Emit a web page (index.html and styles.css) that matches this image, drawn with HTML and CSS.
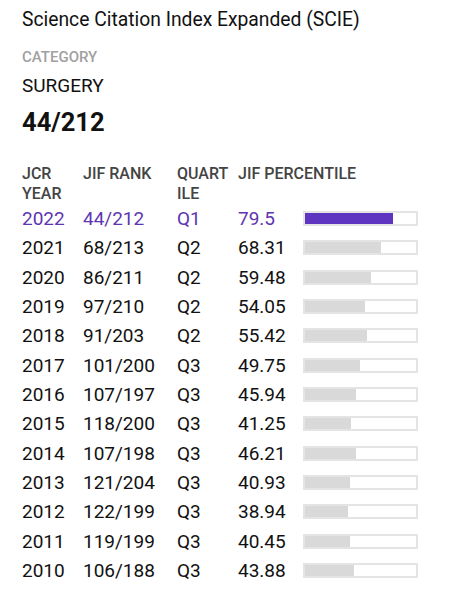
FILE: index.html
```html
<!DOCTYPE html>
<html>
<head>
<meta charset="utf-8">
<link rel="stylesheet" href="styles.css">
</head>
<body>
<div class="page">
  <div class="title">Science Citation Index Expanded (SCIE)</div>
  <div class="cat-label">CATEGORY</div>
  <div class="cat-name">SURGERY</div>
  <div class="cat-rank">44/212</div>
  <div class="table">
    <div class="row head">
      <div>JCR YEAR</div><div>JIF RANK</div><div class="q">QUARTILE</div><div class="pct-h">JIF PERCENTILE</div>
    </div>
    <div class="row current"><div>2022</div><div>44/212</div><div>Q1</div><div>79.5</div><div class="bar"><span style="width:79.5%"></span></div></div>
    <div class="row"><div>2021</div><div>68/213</div><div>Q2</div><div>68.31</div><div class="bar"><span style="width:68.31%"></span></div></div>
    <div class="row"><div>2020</div><div>86/211</div><div>Q2</div><div>59.48</div><div class="bar"><span style="width:59.48%"></span></div></div>
    <div class="row"><div>2019</div><div>97/210</div><div>Q2</div><div>54.05</div><div class="bar"><span style="width:54.05%"></span></div></div>
    <div class="row"><div>2018</div><div>91/203</div><div>Q2</div><div>55.42</div><div class="bar"><span style="width:55.42%"></span></div></div>
    <div class="row"><div>2017</div><div>101/200</div><div>Q3</div><div>49.75</div><div class="bar"><span style="width:49.75%"></span></div></div>
    <div class="row"><div>2016</div><div>107/197</div><div>Q3</div><div>45.94</div><div class="bar"><span style="width:45.94%"></span></div></div>
    <div class="row"><div>2015</div><div>118/200</div><div>Q3</div><div>41.25</div><div class="bar"><span style="width:41.25%"></span></div></div>
    <div class="row"><div>2014</div><div>107/198</div><div>Q3</div><div>46.21</div><div class="bar"><span style="width:46.21%"></span></div></div>
    <div class="row"><div>2013</div><div>121/204</div><div>Q3</div><div>40.93</div><div class="bar"><span style="width:40.93%"></span></div></div>
    <div class="row"><div>2012</div><div>122/199</div><div>Q3</div><div>38.94</div><div class="bar"><span style="width:38.94%"></span></div></div>
    <div class="row"><div>2011</div><div>119/199</div><div>Q3</div><div>40.45</div><div class="bar"><span style="width:40.45%"></span></div></div>
    <div class="row"><div>2010</div><div>106/188</div><div>Q3</div><div>43.88</div><div class="bar"><span style="width:43.88%"></span></div></div>
  </div>
</div>
</body>
</html>
```
FILE: styles.css
```css
html, body {
  margin: 0;
  padding: 0;
  background: #fff;
}
.page {
  padding: 9px 22px 0 22px;
  font-family: Roboto, "Liberation Sans", sans-serif;
  color: #111;
}
.title {
  font-size: 19.3px;
  line-height: 22px;
}
.cat-label {
  margin-top: 17px;
  font-size: 15px;
  line-height: 18px;
  font-weight: 500;
  color: #a0a0a0;
}
.cat-name {
  margin-top: 9px;
  font-size: 19px;
  line-height: 22px;
}
.cat-rank {
  margin-top: 10px;
  font-size: 25.5px;
  line-height: 30px;
  font-weight: 700;
}
.table {
  margin-top: 27px;
}
.row {
  display: grid;
  grid-template-columns: 61px 94px 61px 65px 115px;
  align-items: center;
  height: 29.33px;
  font-size: 19px;
}
.row.head {
  height: auto;
  align-items: start;
  font-size: 16px;
  line-height: 20px;
  font-weight: 500;
  color: #444;
  padding-bottom: 0;
}
.row.head .q {
  word-break: break-all;
  padding-right: 8px;
}
.row.head .pct-h {
  grid-column: 4 / span 2;
}
.row.current {
  color: #5e35b1;
}
.bar {
  height: 15px;
  box-sizing: border-box;
  border: 2px solid #e4e4e4;
  background: #fff;
  display: flex;
}
.bar span {
  background: #d9d9d9;
  height: 100%;
}
.row.current .bar span {
  background: #5e35c0;
}
```
